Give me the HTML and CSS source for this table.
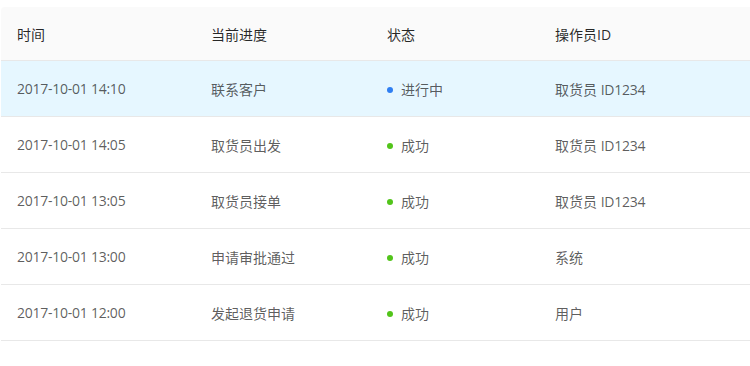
FILE: index.html
```html
<!DOCTYPE html>
<html lang="zh-CN">
<head>
<meta charset="utf-8">
<link rel="stylesheet" href="styles.css">
</head>
<body>
<div class="wrap">
  <table class="tbl">
    <colgroup>
      <col class="c1"><col class="c2"><col class="c3"><col class="c4">
    </colgroup>
    <thead>
      <tr><th>时间</th><th>当前进度</th><th>状态</th><th>操作员ID</th></tr>
    </thead>
    <tbody>
      <tr class="active"><td class="num">2017-10-01 14:10</td><td>联系客户</td><td><span class="dot blue"></span>进行中</td><td>取货员 <span class="num">ID1234</span></td></tr>
      <tr><td class="num">2017-10-01 14:05</td><td>取货员出发</td><td><span class="dot green"></span>成功</td><td>取货员 <span class="num">ID1234</span></td></tr>
      <tr><td class="num">2017-10-01 13:05</td><td>取货员接单</td><td><span class="dot green"></span>成功</td><td>取货员 <span class="num">ID1234</span></td></tr>
      <tr><td class="num">2017-10-01 13:00</td><td>申请审批通过</td><td><span class="dot green"></span>成功</td><td>系统</td></tr>
      <tr><td class="num">2017-10-01 12:00</td><td>发起退货申请</td><td><span class="dot green"></span>成功</td><td>用户</td></tr>
    </tbody>
  </table>
</div>
</body>
</html>
```
FILE: styles.css
```css
html, body {
  margin: 0;
  padding: 0;
  background: #fff;
  overflow: hidden;
}
.wrap {
  padding: 7px 0 0 1px;
  width: 760px;
}
.tbl {
  width: 760px;
  table-layout: fixed;
  border-collapse: separate;
  border-spacing: 0;
  font-family: "Open Sans", "Noto Sans CJK SC", sans-serif;
  font-size: 14px;
  color: rgba(0, 0, 0, 0.65);
}
.c1 { width: 194px; }
.c2 { width: 176px; }
.c3 { width: 168px; }
.c4 { width: 222px; }
.tbl th {
  height: 53px;
  padding: 0 16px;
  text-align: left;
  font-weight: normal;
  color: rgba(0, 0, 0, 0.85);
  background: #fafafa;
  border-bottom: 1px solid #e8e8e8;
}
.tbl th:first-child {
  border-top-left-radius: 4px;
}
.tbl td {
  height: 55px;
  padding: 0 16px;
  border-bottom: 1px solid #e8e8e8;
  white-space: nowrap;
}
.num {
  letter-spacing: -0.25px;
}
.tbl tr.active td {
  background: #e6f7ff;
}
.dot {
  display: inline-block;
  width: 6px;
  height: 6px;
  border-radius: 50%;
  margin-right: 8px;
  vertical-align: middle;
  position: relative;
  top: -1px;
}
.blue { background: #2f7ff2; }
.green { background: #52c41a; }
```
